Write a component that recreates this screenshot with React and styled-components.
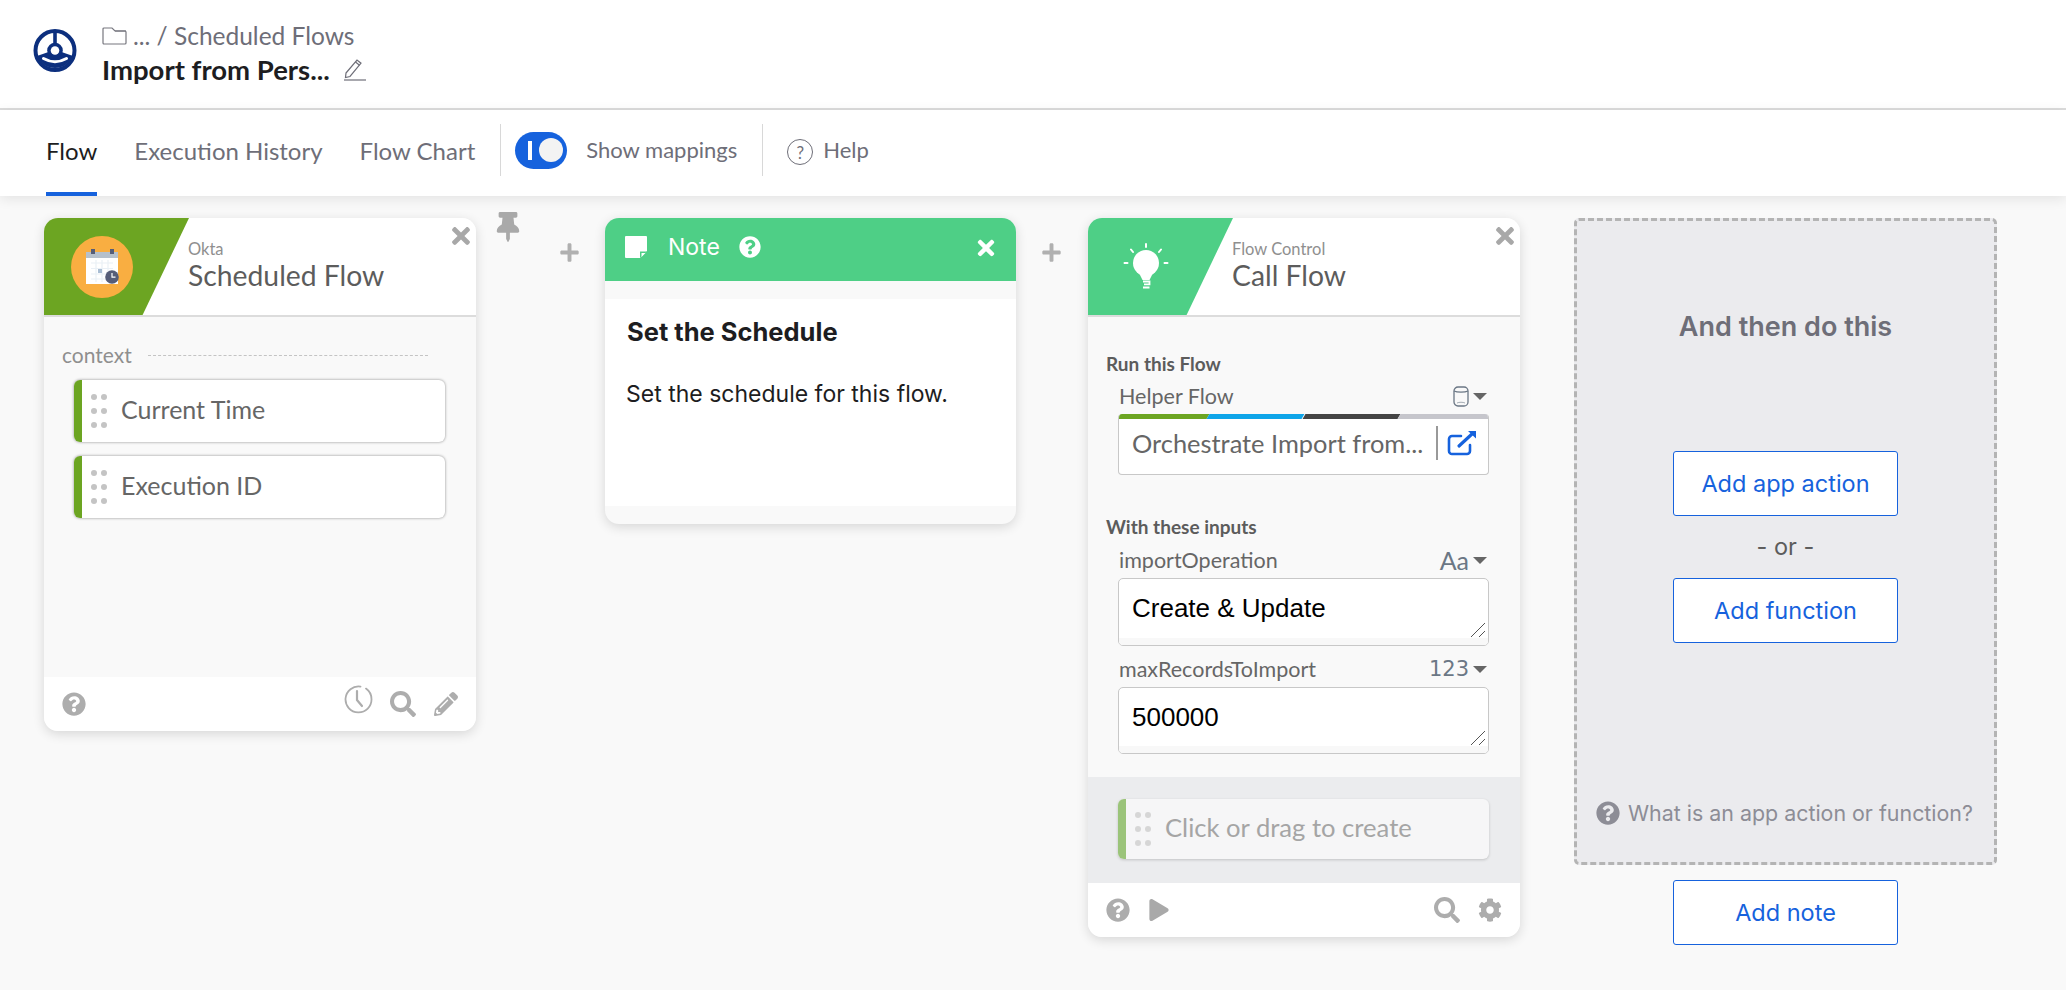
import React from "react";
import styled, { createGlobalStyle } from "styled-components";
import { FaQuestionCircle, FaSearch, FaPencilAlt, FaCog, FaPlay, FaTimes, FaPlus, FaThumbtack } from "react-icons/fa";

const Global = createGlobalStyle`
  html, body { margin: 0; padding: 0; background: #f9f9f9; }
  body { font-family: Lato, "Open Sans", sans-serif; width: 2066px; height: 990px; overflow: hidden; }
  * { box-sizing: border-box; }
`;

const Page = styled.div`display: flex; flex-direction: column; width: 2066px; height: 990px; background: #f9f9f9;`;
const Header = styled.header`
  height: 110px; background: #fff; border-bottom: 2px solid #dcdcdc;
  display: flex; align-items: flex-start; padding: 29px 0 0 33px; gap: 24px;
`;
const Crumbs = styled.div`display: flex; flex-direction: column; margin-top: -8px;`;
const CrumbRow = styled.div`display: flex; align-items: center; gap: 6px; height: 28px; font-size: 24.5px; color: #6e6e78;`;
const TitleRow = styled.div`display: flex; align-items: center; gap: 13px; height: 36px; margin-top: 2px; font-size: 27.5px; font-weight: 700; color: #1d1d21;`;
const Nav = styled.nav`
  height: 86px; background: #fff; display: flex; align-items: stretch; padding-left: 46px;
  box-shadow: 0 3px 12px rgba(0,0,0,.09); position: relative; z-index: 2;
`;
const Tab = styled.div`
  display: flex; align-items: center; font-size: 24px; margin-right: ${p => p.$mr || 37}px;
  color: ${p => p.$active ? "#1d1d21" : "#6e6e78"};
  border-bottom: 4px solid ${p => p.$active ? "#1662dd" : "transparent"};
  padding-bottom: 1px;
`;
const Divider = styled.div`width: 1px; height: 52px; background: #d8d8d8; align-self: center; margin-top: -6px;`;
const Toggle = styled.div`
  width: 52px; height: 37px; border-radius: 19px; background: #1662dd; align-self: center; margin: -6px 0 0 14px;
  display: flex; align-items: center; padding: 0 4px 0 13px; justify-content: space-between;
`;
const ToggleBar = styled.span`width: 4px; height: 19px; background: #fff;`;
const ToggleKnob = styled.span`width: 24px; height: 24px; border-radius: 50%; background: #f3f3f3;`;
const NavLabel = styled.div`align-self: center; margin: -7px ${p => p.$mr}px 0 ${p => p.$ml}px; font-size: 22px; color: #6e6e78;`;
const HelpIcon = styled.div`
  width: 26px; height: 26px; border: 1.5px solid #6e6e78; border-radius: 50%; align-self: center; margin: -2px 0 0 24px;
  display: flex; align-items: center; justify-content: center; font-size: 17px; color: #6e6e78;
`;

const Canvas = styled.main`flex: 1; display: flex; align-items: flex-start; padding: 22px 0 0 44px;`;
const Card = styled.section`
  position: relative; width: ${p => p.$w}px; height: ${p => p.$h}px; border-radius: 14px; overflow: hidden;
  background: #f9f9f9; display: flex; flex-direction: column; flex: none;
  box-shadow: 0 3px 12px rgba(0,0,0,.14);
`;
const CardHead = styled.div`height: 99px; flex: none; background: #fff; border-bottom: 2px solid #dcdcdc; display: flex;`;
const Wedge = styled.div`
  width: 145px; background: ${p => p.$c}; display: flex; align-items: center;
  clip-path: polygon(0 0, 100% 0, 68% 100%, 0 100%); padding-left: ${p => p.$pl}px;
`;
const HeadText = styled.div`margin-left: -1px; padding-top: 22px;`;
const Vendor = styled.div`font-size: 16.5px; line-height: 18px; color: #8f8f8f;`;
const CardTitle = styled.div`font-size: 28.3px; line-height: 34px; color: #5c5c5c;`;
const Close = styled.div`position: absolute; top: ${p => p.$t}px; right: ${p => p.$r}px; color: ${p => p.$c}; display: flex; font-size: ${p => p.$s}px;`;

const Body = styled.div`flex: 1; padding: ${p => p.$p};`;
const ContextRow = styled.div`display: flex; align-items: center; gap: 16px; font-size: 21px; color: #8f8f8f; height: 24px; margin-left: 18px; margin-bottom: 14px;`;
const Dashed = styled.div`width: 280px; border-top: 1px dashed #c4c4c4; margin-top: 2px;`;
const Item = styled.div`
  display: flex; align-items: center; height: 62px; width: 371px; margin: 0 0 14px 30px;
  border-radius: 6px; overflow: hidden; font-size: 25px; color: #666;
  background: #fff; box-shadow: 0 0 3px rgba(0,0,0,.45);
`;
const ItemBar = styled.div`width: 8px; align-self: stretch; background: ${p => p.$c};`;
const ItemText = styled.span`padding-bottom: 4px; margin-left: -1px;`;
const Dots = styled.div`display: grid; grid-template-columns: 6px 6px; gap: 8px 4px; margin: 0 15px 0 9px; width: 16px;`;
const Dot = styled.span`width: 6px; height: 6px; border-radius: 50%; background: ${p => p.$c || "#c4c4c4"};`;

const Foot = styled.div`
  height: 54px; flex: none; background: #fff; display: flex; align-items: center; padding: 0 18px; color: #adadad;
`;
const FootIcon = styled.div`display: flex; margin-left: ${p => p.$ml || 0}px; margin-top: ${p => p.$mt || 0}px;`;
const Push = styled.div`flex: 1;`;

const Connector = styled.div`
  position: relative; width: ${p => p.$w}px; flex: none; display: flex; justify-content: ${p => p.$just}; padding: 24px ${p => p.$pr}px 0 0; color: #b0b0b0;
`;
const Pin = styled.div`position: absolute; left: 17px; top: -6px; display: flex; color: #a9a9a9;`;

const NoteHead = styled.div`
  height: 63px; background: #4ecf86; flex: none; display: flex; align-items: center; padding: 0 0 6px 20px; color: #fff; position: relative;
`;
const NoteLabel = styled.div`font-size: 23px; margin: 0 19px 0 21px; font-family: Inter, sans-serif;`;
const NoteBody = styled.div`margin: 18px 0; flex: 1; background: #fff; padding: 18px 21px; font-family: Inter, sans-serif; color: #1d1d21;`;
const NoteTitle = styled.div`font-size: 25.5px; font-weight: 700; line-height: 30px; padding-left: 1px;`;
const NoteText = styled.div`font-size: 23px; line-height: 30px; margin-top: 32px;`;

const SectionTitle = styled.div`font-size: 19px; font-weight: 700; color: #5c5c5c; line-height: 24px; margin: ${p => p.$mt}px 0 0 18px;`;
const FieldHead = styled.div`
  display: flex; justify-content: space-between; align-items: center; height: 28px; margin: ${p => p.$mt}px 33px 4px 31px; font-size: 21.5px; color: #666;
`;
const TypeTag = styled.div`display: flex; align-items: center; gap: 2px; font-size: 25px; color: #6b7785;`;
const NumTag = styled(TypeTag)`font-size: 21px; font-family: "DejaVu Sans", sans-serif;`;
const Caret = styled.span`width: 0; height: 0; border: 7px solid transparent; border-top: 7px solid #666; border-bottom: 0; margin-left: 2px;`;
const Selector = styled.div`
  margin: 2px 31px 0 30px; height: 61px; width: 371px; background: #fff; border: 1px solid #c8c8c8; border-top: 0; border-radius: 4px; overflow: hidden;
`;
const Stripe = styled.div`display: flex; height: 5px; margin: 0 -6px;`;
const StripeSeg = styled.span`flex: 1; background: ${p => p.$c}; transform: skewX(-30deg);`;
const SelectorRow = styled.div`display: flex; align-items: center; padding: 7px 0 0 13px; font-size: 25.4px; color: #666;`;
const SelectorText = styled.div`width: 304px; white-space: nowrap;`;
const VLine = styled.div`width: 2px; height: 34px; background: #999; margin-right: 9px;`;
const InputBox = styled.div`
  position: relative; margin: 0 31px 0 30px; width: 371px; height: ${p => p.$h}px; background: #fff; border: 1px solid #c8c8c8; border-radius: 5px; overflow: hidden;
  padding: 13px 13px; font-family: "Liberation Sans", Arial, sans-serif; font-size: 26px; line-height: 32px; color: #000;
`;
const InputStripe = styled.div`position: absolute; left: 0; right: 0; bottom: 0; height: 7px; background: #f8f8f8;`;
const Grip = styled.svg`position: absolute; right: 2px; bottom: 7px;`;
const CreateZone = styled.div`height: 106px; flex: none; background: #ebecee; padding-top: 22px;`;
const GhostItem = styled(Item)`
  height: 60px; margin: 0 0 0 30px; width: 371px; background: #f6f6f7; color: #a5a5a5; font-size: 25.6px; box-shadow: 0 1px 3px rgba(0,0,0,.18);
`;
const Side = styled.div`width: 423px; margin-left: 54px; flex: none; display: flex; flex-direction: column; align-items: center;`;
const Panel = styled.div`
  width: 423px; height: 647px; border: 3px dashed #b4b4b4; border-radius: 5px; background: #ebebee; display: flex; flex-direction: column; align-items: center;
  font-family: Inter, sans-serif; padding-top: 90px;
`;
const PanelTitle = styled.div`font-size: 27px; font-weight: 600; color: #6e6e78; line-height: 32px;`;
const AddBtn = styled.div`
  width: 225px; height: 65px; flex: none; background: #fff; border: 1.5px solid #1662dd; border-radius: 3px; color: #1662dd;
  display: flex; align-items: center; justify-content: center; font-size: 23.5px; font-family: Inter, sans-serif;
  margin-top: ${p => p.$mt || 0}px;
`;
const Or = styled.div`font-size: 23.5px; color: #5c5c5c; line-height: 62px; height: 62px;`;
const PanelHelp = styled.div`
  margin-top: auto; margin-bottom: 36px; display: flex; align-items: center; gap: 8px; font-size: 21.4px; color: #8d8d96; white-space: nowrap; margin-left: -2px;
`;

const Logo = () => (
  <svg width="45" height="44" viewBox="0 0 45 44" style={{ flex: "none" }}>
    <circle cx="22" cy="21.5" r="19.5" fill="none" stroke="#0c2f7e" strokeWidth="4" />
    <path d="M20.200 3h3.600v12h-3.600z" fill="#0c2f7e" />
    <path d="M4 27 15.500 23H28.500L40 27A19.500 19.500 0 0 1 4 27z" fill="#0c2f7e" />
    <path d="M10.500 29.500Q22 36 33.500 29.500" fill="none" stroke="#fff" strokeWidth="3" strokeLinecap="round" />
    <circle cx="22" cy="21.500" r="7.800" fill="#0c2f7e" />
    <circle cx="22" cy="21.500" r="4.300" fill="#fff" />
  </svg>
);
const Folder = () => (
  <svg width="25" height="19" viewBox="0 0 25 19" fill="none" stroke="#77777f" strokeWidth="1.2">
    <path d="M1 3a1 1 0 0 1 1-1h8l3 3h10a1 1 0 0 1 1 1v11a1 1 0 0 1-1 1H2a1 1 0 0 1-1-1z" />
    <path d="M13 5h11" />
  </svg>
);
const EditPen = () => (
  <svg width="24" height="23" viewBox="0 0 24 23" fill="none" stroke="#6e6e78" strokeWidth="1.2">
    <path d="M3 15 14 2l4 3.200L7 18.500l-4.500 1z" />
    <path d="M12.500 4l4 3.200" />
    <path d="M1 22h22" />
  </svg>
);
const Calendar = () => (
  <svg width="62" height="62" viewBox="0 0 62 62" style={{ flex: "none" }}>
    <circle cx="31" cy="31" r="31" fill="#f9ae41" />
    <rect x="15" y="16" width="32" height="32" fill="#fff" />
    <path d="M15 16h32v6H15z" fill="#b6c0cb" />
    <rect x="20" y="13" width="4" height="5" fill="#565d78" />
    <rect x="39" y="13" width="4" height="5" fill="#565d78" />
    <path d="M20 27h22M20 32.500h22M20 38h22M20 43h14M25 24v22M31 24v22M37 24v12" stroke="#eaf0f6" strokeWidth="1.2" />
    <rect x="27" y="33" width="4" height="4" fill="#a9bdd3" />
    <circle cx="41" cy="41" r="6.800" fill="#565d78" />
    <path d="M41 37v4.200h3.500" stroke="#fff" strokeWidth="1.2" fill="none" />
  </svg>
);
const Bulb = () => (
  <svg width="46" height="47" viewBox="0 0 46 47" style={{ flex: "none" }} fill="#fff" stroke="#fff" strokeLinecap="round">
    <circle cx="23" cy="20" r="13" stroke="none" />
    <path d="M16 30 19.500 37h7L30 30z" stroke="none" />
    <path d="M20 38.500h6.500v2.800H21M20 44.500h6.500" strokeWidth="1.8" fill="none" strokeLinecap="butt" />
    <path d="M23 1v3M8 6.500l2 2.500M38 6.500l-2 2.500M1.500 20h3M41.500 20h3" strokeWidth="2" fill="none" />
  </svg>
);
const NoteIcon = () => (
  <svg width="22" height="22" viewBox="0 0 22 22" style={{ flex: "none" }}>
    <path d="M1 0h20a1 1 0 0 1 1 1v14l-7 7H1a1 1 0 0 1-1-1V1a1 1 0 0 1 1-1z" fill="#fff" />
    <path d="M15 15.500h7L15 22z" fill="#4ecf86" />
    <path d="M16.500 17h4l-4 4z" fill="#fff" />
  </svg>
);
const Clock = () => (
  <svg width="29" height="29" viewBox="0 0 29 29" fill="none" stroke="#adadad" strokeWidth="1.8" strokeLinecap="round">
    <path d="M16.500 1.600A13 13 0 1 0 27.500 14 13 13 0 0 0 22 3.600" />
    <path d="M13 6v9l5 6" strokeWidth="2.2" />
  </svg>
);
const Db = () => (
  <svg width="16" height="21" viewBox="0 0 16 21" fill="none" stroke="#6b7785" strokeWidth="1.3">
    <rect x="1" y="1" width="14" height="19" rx="4" />
    <path d="M1 5c3 1.500 11 1.500 14 0" />
    <path d="M4 17c2-1 6-1 8 0" strokeWidth=".6" />
  </svg>
);
const External = () => (
  <svg width="30" height="26" viewBox="0 0 30 26" fill="none" stroke="#1662dd" strokeWidth="2.6" strokeLinecap="round">
    <path d="M23 15v6a3 3 0 0 1-3 3H5a3 3 0 0 1-3-3V9a3 3 0 0 1 3-3h9" />
    <path d="M12 16 25 4" strokeWidth="3.2" />
    <path d="M29 1v7.500L21 1z" fill="#1662dd" stroke="none" />
  </svg>
);
const Handle = () => (
  <Grip width="16" height="16" viewBox="0 0 16 16" stroke="#555" strokeWidth="1">
    <path d="M1 15 15 1M9 15l6-6" />
  </Grip>
);
const Drag = ({ c }) => (
  <Dots>{[0, 1, 2, 3, 4, 5].map(i => <Dot key={i} $c={c} />)}</Dots>
);

export default function App() {
  return (
    <Page>
      <Global />
      <Header>
        <Logo />
        <Crumbs>
          <CrumbRow><Folder /><span>... / Scheduled Flows</span></CrumbRow>
          <TitleRow><span>Import from Pers...</span><EditPen /></TitleRow>
        </Crumbs>
      </Header>
      <Nav>
        <Tab $active>Flow</Tab>
        <Tab>Execution History</Tab>
        <Tab $mr={25}>Flow Chart</Tab>
        <Divider />
        <Toggle><ToggleBar /><ToggleKnob /></Toggle>
        <NavLabel $ml={19} $mr={25}>Show mappings</NavLabel>
        <Divider />
        <HelpIcon>?</HelpIcon>
        <NavLabel $ml={10} $mr={0}>Help</NavLabel>
      </Nav>
      <Canvas>
        <Card $w={432} $h={513}>
          <CardHead>
            <Wedge $c="#6ca522" $pl={27}><Calendar /></Wedge>
            <HeadText>
              <Vendor>Okta</Vendor>
              <CardTitle>Scheduled Flow</CardTitle>
            </HeadText>
          </CardHead>
          <Close $t={5} $r={2} $s={26} $c="#a8a8a8"><FaTimes /></Close>
          <Body $p="25px 0 0">
            <ContextRow><span>context</span><Dashed /></ContextRow>
            <Item><ItemBar $c="#6ca522" /><Drag /><ItemText>Current Time</ItemText></Item>
            <Item><ItemBar $c="#6ca522" /><Drag /><ItemText>Execution ID</ItemText></Item>
          </Body>
          <Foot>
            <FaQuestionCircle size={24} />
            <Push />
            <FootIcon $mt={-10}><Clock /></FootIcon>
            <FootIcon $ml={17}><FaSearch size={26} /></FootIcon>
            <FootIcon $ml={18}><FaPencilAlt size={24} /></FootIcon>
          </Foot>
        </Card>
        <Connector $w={129} $just="flex-end" $pr={25}>
          <Pin><FaThumbtack size={30} /></Pin>
          <FaPlus size={21} />
        </Connector>
        <Card $w={411} $h={306}>
          <NoteHead>
            <NoteIcon />
            <NoteLabel>Note</NoteLabel>
            <FaQuestionCircle size={22} />
            <Close $t={18} $r={18} $s={24} $c="#fff"><FaTimes /></Close>
          </NoteHead>
          <NoteBody>
            <NoteTitle>Set the Schedule</NoteTitle>
            <NoteText>Set the schedule for this flow.</NoteText>
          </NoteBody>
        </Card>
        <Connector $w={72} $just="center" $pr={2}>
          <FaPlus size={21} />
        </Connector>
        <Card $w={432} $h={719}>
          <CardHead>
            <Wedge $c="#4ecf86" $pl={35}><Bulb /></Wedge>
            <HeadText>
              <Vendor>Flow Control</Vendor>
              <CardTitle>Call Flow</CardTitle>
            </HeadText>
          </CardHead>
          <Close $t={5} $r={2} $s={26} $c="#a8a8a8"><FaTimes /></Close>
          <Body $p="0">
            <SectionTitle $mt={35}>Run this Flow</SectionTitle>
            <FieldHead $mt={6}>
              <span>Helper Flow</span>
              <TypeTag><Db /><Caret /></TypeTag>
            </FieldHead>
            <Selector>
              <Stripe>
                <StripeSeg $c="#6ca522" /><StripeSeg $c="#0ea5e9" /><StripeSeg $c="#444" /><StripeSeg $c="#c6c6cc" />
              </Stripe>
              <SelectorRow>
                <SelectorText>Orchestrate Import from...</SelectorText>
                <VLine /><External />
              </SelectorRow>
            </Selector>
            <SectionTitle $mt={40}>With these inputs</SectionTitle>
            <FieldHead $mt={7}>
              <span>importOperation</span>
              <TypeTag>Aa<Caret /></TypeTag>
            </FieldHead>
            <InputBox $h={68}>Create &amp; Update<InputStripe /><Handle /></InputBox>
            <FieldHead $mt={9}>
              <span>maxRecordsToImport</span>
              <NumTag>123<Caret /></NumTag>
            </FieldHead>
            <InputBox $h={67}>500000<InputStripe /><Handle /></InputBox>
          </Body>
          <CreateZone>
            <GhostItem>
              <ItemBar $c="#9bc47a" />
              <Drag c="#d6d6d6" />
              <ItemText>Click or drag to create</ItemText>
            </GhostItem>
          </CreateZone>
          <Foot>
            <FaQuestionCircle size={24} />
            <FootIcon $ml={18}><FaPlay size={22} color="#a9a9a9" /></FootIcon>
            <Push />
            <FootIcon><FaSearch size={26} /></FootIcon>
            <FootIcon $ml={18}><FaCog size={24} /></FootIcon>
          </Foot>
        </Card>
        <Side>
          <Panel>
            <PanelTitle>And then do this</PanelTitle>
            <AddBtn $mt={108}>Add app action</AddBtn>
            <Or>- or -</Or>
            <AddBtn>Add function</AddBtn>
            <PanelHelp><FaQuestionCircle size={24} /><span>What is an app action or function?</span></PanelHelp>
          </Panel>
          <AddBtn $mt={15}>Add note</AddBtn>
        </Side>
      </Canvas>
    </Page>
  );
}
